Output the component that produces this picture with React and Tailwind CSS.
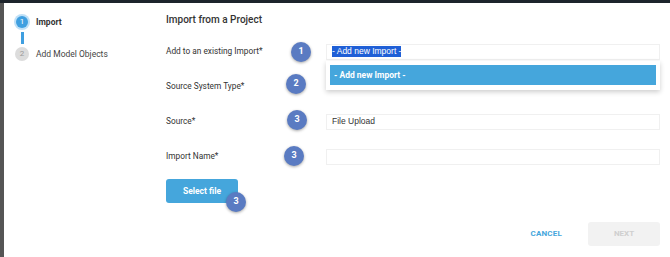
import React from "react";

function Badge({ n, className }) {
  return (
    <div
      className={`absolute w-[20px] h-[20px] rounded-full bg-[#5a7bc2] text-white text-[9px] font-bold flex items-center justify-center shadow-[0_1px_3px_rgba(0,0,0,0.35)] ${className}`}
    >
      {n}
    </div>
  );
}

function Row({ label, children }) {
  return (
    <div className="flex items-center h-[35px]">
      <div className="w-[160px] text-[8.3px] text-[#333]">{label}</div>
      <div className="flex-1">{children}</div>
    </div>
  );
}

export default function App() {
  return (
    <div
      className="w-[670px] h-[257px] flex flex-col bg-white overflow-hidden relative"
      style={{ fontFamily: "Roboto, 'Liberation Sans', sans-serif" }}
    >
      <div className="h-[3px] bg-[#1d242c] shrink-0" />
      <div className="flex flex-1 min-h-0">
        <div className="w-[4px] bg-[#555555] shrink-0" />
        <div className="w-[162px] shrink-0 pl-[10px] pt-[11px]">
          <div className="flex items-center gap-[6px]">
            <div className="w-[16px] h-[16px] rounded-full bg-[#bfe0f7] flex items-center justify-center">
              <div className="w-[12px] h-[12px] rounded-full bg-[#3f9fe0] text-white text-[8px] flex items-center justify-center">
                1
              </div>
            </div>
            <span className="text-[8.5px] font-bold text-[#333]">Import</span>
          </div>
          <div className="ml-[6.5px] w-[3px] h-[12px] my-[2px] bg-[#3f9fe0]" />
          <div className="flex items-center gap-[6px]">
            <div className="w-[16px] h-[16px] flex items-center justify-center">
              <div className="w-[14px] h-[14px] rounded-full bg-[#dcdcdc] text-[#9a9a9a] text-[8px] flex items-center justify-center">
                2
              </div>
            </div>
            <span className="text-[8.5px] text-[#444]">Add Model Objects</span>
          </div>
        </div>
        <div className="flex-1 flex flex-col pr-[10px] pt-[10px]">
          <div className="text-[10px] font-medium text-[#333] leading-[14px] h-[21px]">
            Import from a Project
          </div>
          <div className="relative">
            <Row label="Add to an existing Import*">
              <div
                className="h-[16px] border border-[#f0f0f0] flex items-center px-[5px] text-[8.5px] text-[#333]"
                style={{ fontFamily: "'Liberation Sans', Arial, sans-serif" }}
              >
                <span className="bg-[#1f5fd6] text-white leading-[11px]">- Add new Import -</span>
              </div>
            </Row>
            <Row label="Source System Type*">
              <div className="h-[16px]" />
            </Row>
            <Row label="Source*">
              <div
                className="h-[16px] border border-[#f0f0f0] flex items-center px-[5px] text-[8.5px] text-[#333]"
                style={{ fontFamily: "'Liberation Sans', Arial, sans-serif" }}
              >
                File Upload
              </div>
            </Row>
            <Row label="Import Name*">
              <div className="h-[16px] border border-[#f0f0f0]" />
            </Row>
            <div className="absolute left-[160px] right-0 top-[27px] h-[29px] bg-white shadow-[0_2px_5px_rgba(0,0,0,0.2)] p-[4px]">
              <div className="h-[20px] bg-[#45a6dc] flex items-center px-[4px] text-[8.5px] font-bold text-white">
                - Add new Import -
              </div>
            </div>
            <Badge n="1" className="left-[125px] top-[8px]" />
            <Badge n="2" className="left-[120px] top-[40px]" />
            <Badge n="3" className="left-[121px] top-[76px]" />
            <Badge n="3" className="left-[118px] top-[112px]" />
          </div>
          <div className="relative mt-[3px] w-[72px]">
            <button className="w-[72px] h-[24px] rounded-[3px] bg-[#45a6dc] text-white text-[8.5px] font-bold">
              Select file
            </button>
            <Badge n="3" className="left-[60px] top-[15px]" />
          </div>
          <div className="flex-1" />
          <div className="flex items-center justify-end gap-[26px] pb-[11px]">
            <span className="text-[8px] font-bold text-[#45a6dc] tracking-[0.2px]">CANCEL</span>
            <div className="w-[72px] h-[24px] rounded-[3px] bg-[#f2f2f2] text-[#cfcfcf] text-[8px] font-bold flex items-center justify-center">
              NEXT
            </div>
          </div>
        </div>
      </div>
    </div>
  );
}
